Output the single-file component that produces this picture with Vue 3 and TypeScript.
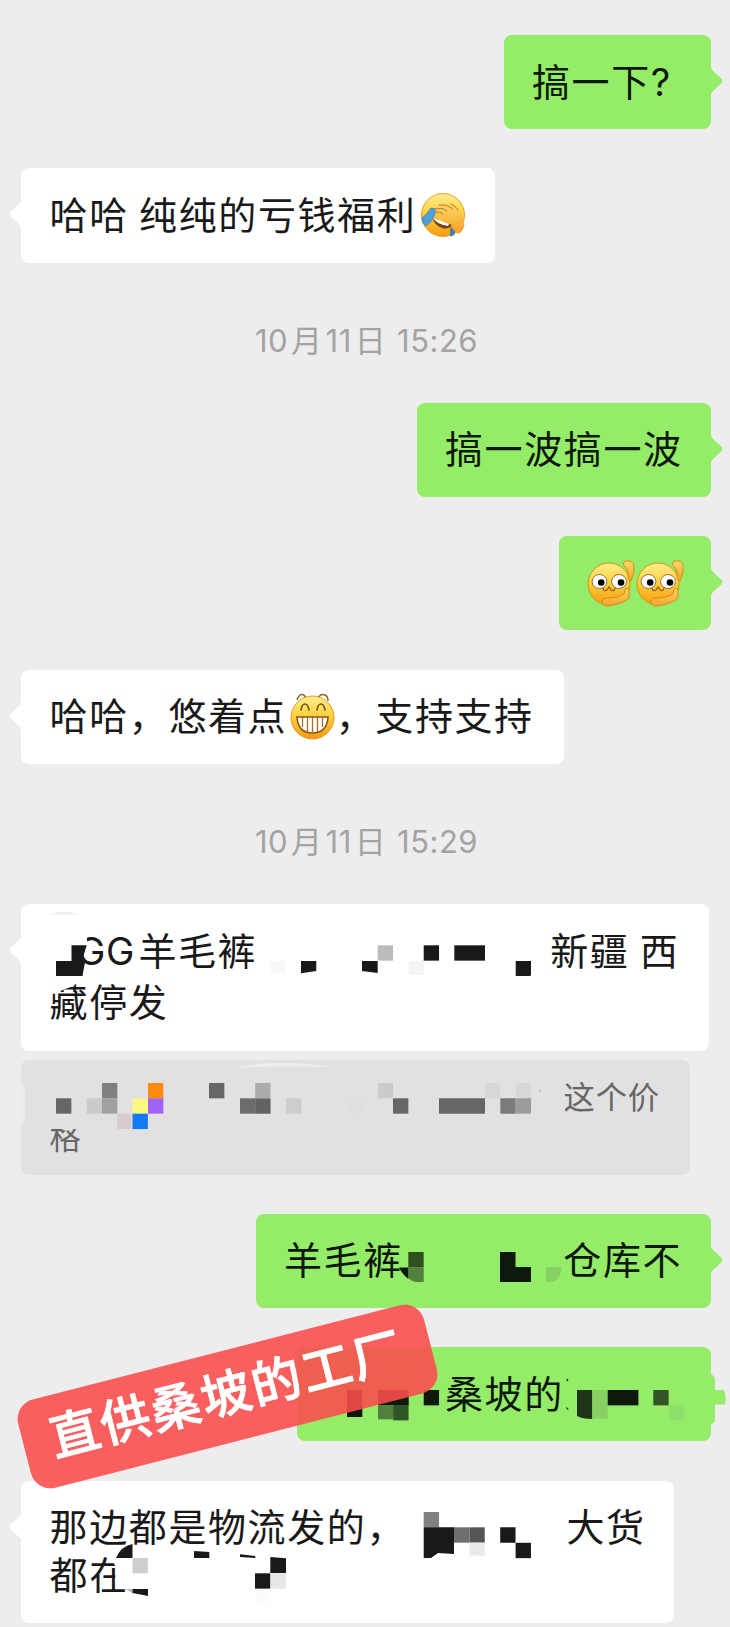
<script setup lang="ts">
import { computed } from 'vue'

type Emoji = 'facepalm' | 'gaze' | 'grin'
interface Segment { text?: string; emoji?: Emoji; cls?: string }
interface Shape { d: string; fill: string }
interface Message {
  id: string
  kind: 'mine' | 'theirs' | 'quote' | 'time'
  lines: Segment[][]
  box?: [number, number, number, number]
  tail?: boolean
  shapes?: Shape[]
}

const U = 15.35
const cell = (x: number, y: number, fill: string, w = U, h = U): Shape => ({ d: `M${x} ${y}h${w}v${h}h${-w}z`, fill })
const path = (d: string, fill = '#191919'): Shape => ({ d, fill })
const INK = '#191919'
const LEAF = '#0f190b'

const stamp = (time: string): Segment[][] => [
  [{ text: '10' }, { text: '月' }, { text: '11' }, { text: '日' }, { text: ' ' + time }],
]

const messages: Message[] = [
  { id: 'm1', kind: 'mine', tail: true, lines: [[{ text: '搞一下?' }]] },
  { id: 'm2', kind: 'theirs', tail: true, lines: [[{ text: '哈哈 纯纯的亏钱福利' }, { emoji: 'facepalm' }]] },
  { id: 't1', kind: 'time', lines: stamp('15:26') },
  { id: 'm3', kind: 'mine', tail: true, lines: [[{ text: '搞一波搞一波' }]] },
  { id: 'm4', kind: 'mine', tail: true, lines: [[{ emoji: 'gaze' }, { emoji: 'gaze' }]] },
  { id: 'm5', kind: 'theirs', tail: true, lines: [[{ text: '哈哈，悠着点' }, { emoji: 'grin' }, { text: '，支持支持' }]] },
  { id: 't2', kind: 'time', lines: stamp('15:29') },
  {
    id: 'm6', kind: 'theirs', tail: true, box: [21, 904, 688, 147],
    lines: [[{ text: 'GG', cls: 'brand' }, { text: '羊毛裤', cls: 'pants' }, { text: '新疆 西', cls: 'region' }], [{ text: '藏停发' }]],
    shapes: [
      path('M78 934H87V944L93 940L84 958L82 966H78z', '#fff'),
      path('M56 961H71.5V945.3H86.7L83.7 955L85 962L82.5 976H56z'),
      path('M51 914.5Q64 908.5 77 914.5z', '#ececec'),
      path('M49 980H77L74 986L68 988L60 991L49 991z', '#fff'),
      cell(271, 961, '#f8f8f8', 14, 12),
      path('M301 961H316.3V971L301 973.3z'), path('M362 961H377.7V973L362 971z'),
      cell(377.7, 945.3, '#bcbcbc'), cell(408.5, 961, '#f5f5f5', U, 14),
      cell(423.7, 945.3, INK), cell(454.3, 945.3, INK, 30.7),
      path('M515.7 961H531V975L530 976H515.7z'),
    ],
  },
  {
    id: 'q1', kind: 'quote', box: [21, 1060, 669, 115],
    lines: [[{ text: '这个价', cls: 'price' }], [{ text: '格' }]],
    shapes: [
      path('M49 1118H84V1129H72L66 1131L62 1129H49z', '#e1e1e1'),
      cell(56, 1098.3, '#666'), cell(86.7, 1098.3, '#cbcbcb'), cell(102, 1083, '#7f7f7f'), cell(102, 1098.3, '#a0a0a0'),
      cell(117.3, 1113.7, '#d9cacc', 14), cell(132.5, 1098.3, '#fcf982'), cell(132.5, 1113.7, '#107af4'),
      cell(148, 1083, '#ff8a0b'), cell(148, 1098.3, '#a063f6'), cell(209, 1083, '#666'),
      cell(240, 1098.3, '#6c6c6c'), cell(255.2, 1098.3, '#626262'), cell(255.2, 1083, '#ababab'), cell(286, 1098.3, '#cdcdcd'),
      cell(347, 1098.3, '#dfdfdf'), cell(377.7, 1083, '#cbcbcb'), cell(393, 1098.3, '#666'), cell(439, 1098.3, '#666', 46),
      cell(485, 1083, '#d7d7d7'), cell(500.3, 1098.3, '#7b7b7b'), cell(515.7, 1083, '#d7d7d7'), cell(515.7, 1098.3, '#9c9c9c'),
      cell(539, 1090, '#a8a8a8', 1.5, 1.5),
      path('M20 1084Q25 1084 25 1088V1122Q25 1125 20 1125z', '#ebebeb'),
      path('M234 1068Q278 1058 332 1067.5Q280 1065 234 1068z', '#eeeeee'),
    ],
  },
  {
    id: 'm7', kind: 'mine', tail: true, box: [256, 1214, 455, 94],
    lines: [[{ text: '羊毛裤' }, { text: '仓库不', cls: 'stock' }]],
    shapes: [
      cell(408.3, 1252, '#305020'), path('M408.3 1267.3H423.7V1282H416Q411 1281 408.3 1278z', '#52803d'),
      path('M399 1267.5H408.3V1279Q402 1274 399 1267.5z', LEAF),
      path('M500 1252H515.5V1267H531V1282H500z', LEAF), path('M546 1267H561.3Q561 1279 553 1282H546z', '#86d160'),
    ],
  },
  {
    id: 'm8', kind: 'mine', box: [297, 1347, 414, 94],
    lines: [[{ text: '桑坡的', cls: 'hill' }]],
    shapes: [
      cell(347, 1390, LEAF, U, 27), cell(378, 1390, LEAF, 30.7), cell(378, 1405, '#4f803c', U, 14.3), cell(393.2, 1405, '#305524'),
      cell(423.7, 1390, LEAF), path('M577 1390H592.3V1419Q582 1419 577 1416z', '#1f3517'), cell(592.3, 1390, '#88cf64', U, 28.7),
      cell(607.7, 1390, LEAF, 30.7), cell(653.3, 1390, '#345427'), cell(669, 1405, '#8ee069'),
      path('M566.5 1379L568.5 1379L567 1382z', LEAF), path('M566 1407L568.5 1409L568 1410L566 1408z', LEAF),
      path('M711 1374Q715 1376 715 1380V1390H724Q726.5 1396 725 1404.5H715V1419Q715 1423 711 1424z', '#95ec69'),
    ],
  },
  {
    id: 'm9', kind: 'theirs', tail: true, box: [21, 1481, 653, 142],
    lines: [[{ text: '那边都是物流发的，' }, { text: '大货', cls: 'bulk' }], [{ text: '都在' }]],
    shapes: [
      path('M105 1550H136V1588.5H117L115 1580L116 1568L112 1559L105 1557z', '#fff'),
      path('M116 1558Q121 1546 132.5 1544V1558z'), cell(132.5, 1558, '#cecece'),
      path('M125 1589H132.5V1593z', '#bbb'), path('M132.5 1589H148V1596L132.5 1593z'),
      path('M194 1551L209.3 1552V1558H194z'), path('M240 1554.3L255.3 1556V1558L240 1557z'), path('M270.3 1557L286 1558.3V1573H270.3z'),
      cell(255, 1573.3, INK), cell(270.5, 1573.3, '#e7e7e7'), cell(255, 1589, '#fcfcfc', U, 13),
      cell(423.7, 1512, '#808080'), path('M423.7 1527.3H454V1554L438 1553L431 1558H423.7z'),
      cell(454, 1527.3, '#6f6f6f'), cell(469.4, 1527.3, '#555'), cell(469.4, 1542.7, '#eaeaea', U, 13),
      cell(500.2, 1527.3, INK), cell(515.6, 1542.8, INK),
    ],
  },
]

const rows = computed(() => messages.map((m) => ({ ...m, viewBox: m.box ? m.box.join(' ') : '' })))
</script>

<template>
  <main class="chat">
    <svg class="defs" width="0" height="0" aria-hidden="true">
      <defs>
        <linearGradient id="skin" x1="0" y1="0" x2="0" y2="1">
          <stop offset="0" stop-color="#ffee90" /><stop offset=".45" stop-color="#ffd23c" /><stop offset="1" stop-color="#f79a14" />
        </linearGradient>
        <linearGradient id="hand" x1="0" y1="0" x2="0" y2="1">
          <stop offset="0" stop-color="#ffd766" /><stop offset="1" stop-color="#f5a22c" />
        </linearGradient>
      </defs>
    </svg>

    <div v-for="m in rows" :key="m.id" class="row" :class="[m.kind, m.id]">
      <div :class="m.kind === 'time' ? 'stamp' : 'bubble'">
        <svg v-if="m.tail" class="tail" width="12" height="26" viewBox="0 0 12 26">
          <path d="M0 0Q1 2 3 4L10.2 10.5Q12.5 13 10.2 15.5L3 22Q1 24 0 26z" />
        </svg>
        <div v-for="(line, i) in m.lines" :key="i" class="line">
          <template v-for="(s, j) in line" :key="j">
            <span v-if="s.text" :class="s.cls">{{ s.text }}</span>
            <svg v-else-if="s.emoji === 'facepalm'" class="emoji facepalm" width="46" height="46" viewBox="0 0 46 46">
              <circle cx="23" cy="23" r="21.5" fill="url(#skin)" stroke="#e5a02a" />
              <path d="M12 25Q22 30 32 33Q29 38 22 36Q14 33 12 25z" fill="#774314" />
              <path d="M12.5 25.5L29 32L28 34Q16 32 12.5 25.5z" fill="#fff" />
              <path d="M11 16L16 17Q15 27 6 34Q1 30 2 26Q7 22 11 16z" fill="#4e9fda" stroke="#3979ae" stroke-width=".7" />
              <path d="M30 35L35 38L35 42Q32 45 30 44z" fill="#477eaa" />
              <path d="M16 20Q14 16 19 13Q24 9 31 12Q40 15 42 24L44 32Q42 42 38 41Q33 39 31 31Q24 29 17 24Z" fill="url(#hand)" />
              <path d="M19 13Q27 12 33 17M16 17Q22 15 27 19M16 20Q20 19 23 22M31 12Q36 14 38 18" fill="none" stroke="#a8701f" stroke-width=".9" stroke-linecap="round" />
              <path d="M31 32Q34 41 38 41Q43 40 44 32" fill="none" stroke="#e0922a" stroke-width=".8" />
            </svg>
            <svg v-else-if="s.emoji === 'gaze'" class="emoji gaze" width="48.5" height="48" viewBox="0 0 48.5 48">
              <circle cx="22" cy="24" r="21" fill="url(#skin)" stroke="#d99018" />
              <path d="M38 1Q47 0 47 6V12L44 21L41 19Q42 14 40 9Q34 4 38 1z" fill="url(#hand)" stroke="#d38b1a" />
              <ellipse cx="12.5" cy="21.5" rx="7.4" ry="7" fill="#fff" stroke="#70502a" stroke-width=".8" />
              <ellipse cx="32" cy="21.5" rx="7.4" ry="7" fill="#fff" stroke="#70502a" stroke-width=".8" />
              <circle cx="14.2" cy="22.5" r="3.3" /><circle cx="34" cy="22.5" r="3.3" />
              <path d="M16 28Q17 32 20 30L22 27L24 30Q27 32 28 28" fill="none" stroke="#9b5913" stroke-width="1.3" />
              <path d="M38 29Q42 27 42 30V38Q38 43 21 46Q15 46 15 42Q15 38 22 38Q31 38 37 34z" fill="url(#hand)" stroke="#d38b1a" />
            </svg>
            <svg v-else class="emoji grin" width="46" height="48" viewBox="0 0 46 48">
              <path d="M8 8Q10 1 15 3L18 8M28 8Q31 1 36 3Q39 4 39 9" fill="none" stroke="#8b6824" stroke-width="1.5" />
              <ellipse cx="23.5" cy="25.5" rx="21.5" ry="21.5" fill="url(#skin)" stroke="#e19b20" />
              <path d="M12 18Q13 12 16 12Q19 12 20 18M28 18Q29 12 32 12Q35 12 36 18" fill="none" stroke="#765015" stroke-width="1.6" stroke-linecap="round" />
              <path d="M8 25H39Q38 41 23.5 41Q9 41 8 25z" fill="#fff" stroke="#8a5612" stroke-width="1.6" />
              <path d="M13.5 25V35M18.5 25V40M23.5 25V41M28.5 25V40M33.5 25V35" fill="none" stroke="#a66e22" stroke-width="1.3" />
            </svg>
          </template>
        </div>
        <svg v-if="m.shapes" class="mosaic" :viewBox="m.viewBox" aria-hidden="true">
          <path v-for="(s, k) in m.shapes" :key="k" :d="s.d" :fill="s.fill" />
        </svg>
      </div>
    </div>

    <div class="sticker">直供桑坡的工厂</div>
  </main>
</template>

<style>
html, body { margin: 0; background: #ededed; }
</style>

<style scoped>
.chat {
  position: relative;
  box-sizing: border-box;
  width: 730px;
  height: 1627px;
  padding: 35px 19px 0 21px;
  overflow: hidden;
  background: #ededed;
  display: flex;
  flex-direction: column;
  font-family: Inter, "Noto Sans CJK SC", sans-serif;
  color: #191919;
}
.defs { position: absolute; }
.row { display: flex; flex: none; }
.mine { justify-content: flex-end; }
.bubble {
  position: relative;
  box-sizing: border-box;
  height: 94px;
  padding: 21px 28px 0;
  border-radius: 8px;
  background: #fff;
}
.theirs .bubble, .quote .bubble { padding-left: 28.6px; padding-right: 0; }
.mine .bubble { background: #95ec69; color: #0d180a; }
.line {
  display: flex;
  align-items: center;
  height: 50px;
  font-size: 38px;
  line-height: 50px;
  letter-spacing: 1.6px;
  word-spacing: -2px;
  white-space: pre;
}
.tail { position: absolute; top: 33px; left: 100%; fill: #95ec69; }
.theirs .tail { left: auto; right: 100%; fill: #fff; transform: scaleX(-1); }
.mosaic { position: absolute; inset: 0; width: 100%; height: 100%; overflow: visible; }
.emoji { flex: none; overflow: visible; }
.facepalm { margin-left: 4px; }
.gaze { margin-top: 3px; }
.grin { margin: 0 1px 0 1.5px; }

.m1 .bubble { width: 207px; padding-top: 22px; }
.m2 { margin-top: 39px; }
.m2 .bubble { width: 474px; height: 95px; padding-top: 22px; }
.m3 .bubble { width: 294px; }
.m4 { margin-top: 39px; }
.m4 .bubble { width: 152px; }
.m5 { margin-top: 40px; }
.m5 .bubble { width: 543px; }
.m6 .bubble { width: 688px; height: 147px; }
.m7 { margin-top: 39px; }
.m7 .bubble { width: 455px; }
.m8 { margin-top: 39px; }
.m8 .bubble { width: 414px; padding-top: 22px; }
.m9 { margin-top: 40px; }
.m9 .bubble { width: 653px; height: 142px; padding-top: 22px; }

.time { height: 140px; justify-content: center; align-items: center; }
.stamp { padding: 15px 0 0 1px; color: #a3a3a3; }
.stamp .line { gap: 3px; font-size: 31px; letter-spacing: .5px; word-spacing: -1.5px; }

.m6 .line { height: 51.5px; }
.brand { margin-left: 27.4px; letter-spacing: .6px; }
.pants { margin-left: 3.5px; }
.region { margin-left: 293px; }

.quote { margin-top: 9px; }
.quote .bubble { width: 669px; height: 115px; padding-top: 19px; background: #e1e1e1; color: #666; }
.quote .line { height: 39.5px; line-height: 39.5px; font-size: 31.3px; letter-spacing: .8px; }
.price { margin-left: 514px; }

.stock { margin-left: 160.5px; }
.hill { margin-left: 120px; }
.m9 .line { height: 48.3px; }
.bulk { margin-left: 160.5px; }

.sticker {
  position: absolute;
  left: 17.5px;
  top: 1350.8px;
  width: 419px;
  height: 91px;
  border-radius: 20px;
  background: rgba(250, 77, 77, .89);
  color: #fff;
  font-size: 50px;
  font-weight: 500;
  -webkit-text-stroke: .8px #fff;
  line-height: 86px;
  letter-spacing: 2px;
  text-align: center;
  white-space: nowrap;
  transform: rotate(-14.4deg);
}
</style>
